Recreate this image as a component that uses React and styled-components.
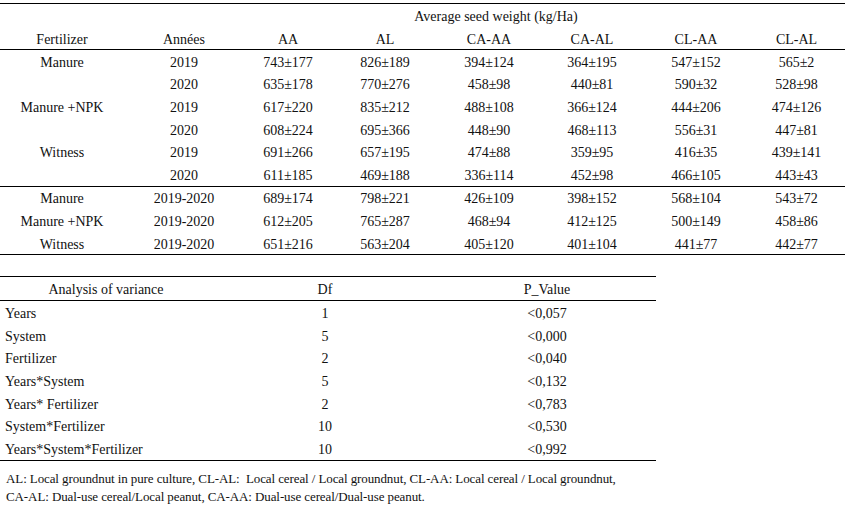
import React from 'react';
import styled, { createGlobalStyle } from 'styled-components';

const GlobalStyle = createGlobalStyle`
  html, body {
    margin: 0;
    padding: 0;
    background: #fff;
  }
  body {
    font-family: "Liberation Serif", "Times New Roman", serif;
    font-size: 14px;
    color: #111;
  }
`;

const Page = styled.div`
  width: 845px;
  height: 512px;
  padding-top: 3px;
  box-sizing: border-box;
  overflow: hidden;
`;

const COLS = '124px 120px 88px 106px 102px 104px 104px 97px';

const YieldTable = styled.div`
  width: 845px;
  border-top: 1px solid #000;
  border-bottom: 1px solid #000;
`;

const Section = styled.div`
  display: grid;
  grid-template-columns: ${COLS};
  grid-template-rows: ${p => p.$rows || 'none'};
  grid-auto-rows: 22.6px;
  border-bottom: ${p => (p.$ruled ? '1px solid #000' : 'none')};
`;

const Cell = styled.div`
  display: flex;
  align-items: center;
  justify-content: ${p => (p.$left ? 'flex-start' : 'center')};
  padding: 3px 0 0 ${p => (p.$left ? '5px' : '0')};
  box-sizing: border-box;
  white-space: nowrap;
  grid-column: ${p => p.$span || 'auto'};
`;

const AnovaTable = styled.div`
  margin-top: 21px;
  width: 656px;
  border-top: 1px solid #000;
  border-bottom: 1px solid #000;
`;

const AnovaSection = styled.div`
  display: grid;
  grid-template-columns: 212px 226px 218px;
  grid-auto-rows: 22.7px;
  border-bottom: ${p => (p.$ruled ? '1px solid #000' : 'none')};
`;

const Note = styled.p`
  margin: 9px 0 0;
  padding-left: 6px;
  font-size: 13px;
  letter-spacing: -0.1px;
  line-height: 18px;
  width: 700px;
`;

const cols = ['AA', 'AL', 'CA-AA', 'CA-AL', 'CL-AA', 'CL-AL'];

const yearly = [
  ['Manure', '2019', '743±177', '826±189', '394±124', '364±195', '547±152', '565±2'],
  ['', '2020', '635±178', '770±276', '458±98', '440±81', '590±32', '528±98'],
  ['Manure +NPK', '2019', '617±220', '835±212', '488±108', '366±124', '444±206', '474±126'],
  ['', '2020', '608±224', '695±366', '448±90', '468±113', '556±31', '447±81'],
  ['Witness', '2019', '691±266', '657±195', '474±88', '359±95', '416±35', '439±141'],
  ['', '2020', '611±185', '469±188', '336±114', '452±98', '466±105', '443±43'],
];

const pooled = [
  ['Manure', '2019-2020', '689±174', '798±221', '426±109', '398±152', '568±104', '543±72'],
  ['Manure +NPK', '2019-2020', '612±205', '765±287', '468±94', '412±125', '500±149', '458±86'],
  ['Witness', '2019-2020', '651±216', '563±204', '405±120', '401±104', '441±77', '442±77'],
];

const anova = [
  ['Years', '1', '<0,057'],
  ['System', '5', '<0,000'],
  ['Fertilizer', '2', '<0,040'],
  ['Years*System', '5', '<0,132'],
  ['Years* Fertilizer', '2', '<0,783'],
  ['System*Fertilizer', '10', '<0,530'],
  ['Years*System*Fertilizer', '10', '<0,992'],
];

const Rows = ({ data }) =>
  data.map((row, i) => row.map((v, j) => <Cell key={i + '-' + j}>{v}</Cell>));

export default function App() {
  return (
    <Page>
      <GlobalStyle />
      <YieldTable>
        <Section $ruled $rows="23px 22px">
          <Cell />
          <Cell />
          <Cell $span="3 / 8">Average seed weight (kg/Ha)</Cell>
          <Cell />
          <Cell>Fertilizer</Cell>
          <Cell>Années</Cell>
          {cols.map(c => <Cell key={c}>{c}</Cell>)}
        </Section>
        <Section $ruled>
          <Rows data={yearly} />
        </Section>
        <Section>
          <Rows data={pooled} />
        </Section>
      </YieldTable>

      <AnovaTable>
        <AnovaSection $ruled>
          <Cell>Analysis of variance</Cell>
          <Cell>Df</Cell>
          <Cell>P_Value</Cell>
        </AnovaSection>
        <AnovaSection>
          {anova.map(([name, df, p]) => (
            <React.Fragment key={name}>
              <Cell $left>{name}</Cell>
              <Cell>{df}</Cell>
              <Cell>{p}</Cell>
            </React.Fragment>
          ))}
        </AnovaSection>
      </AnovaTable>

      <Note>
        AL: Local groundnut in pure culture, CL-AL:&nbsp; Local cereal / Local groundnut, CL-AA: Local cereal / Local groundnut,
        <br />
        CA-AL: Dual-use cereal/Local peanut, CA-AA: Dual-use cereal/Dual-use peanut.
      </Note>
    </Page>
  );
}
